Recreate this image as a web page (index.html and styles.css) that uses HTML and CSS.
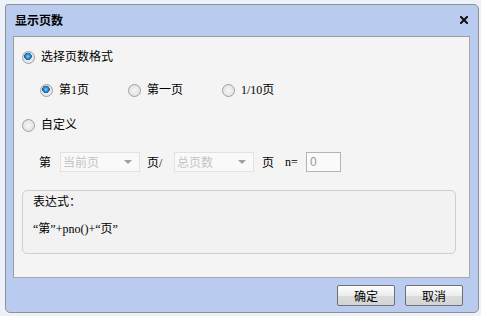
FILE: index.html
```html
<!DOCTYPE html>
<html lang="zh">
<head>
<meta charset="utf-8">
<link rel="stylesheet" href="styles.css">
</head>
<body>
<div class="dialog">
  <div class="titlebar">
    <span class="title">显示页数</span>
    <svg class="close" width="8" height="8" viewBox="0 0 8 8"><path d="M1 1 L7 7 M7 1 L1 7" stroke="#111" stroke-width="2" stroke-linecap="square"/></svg>
  </div>
  <div class="panel">
    <div class="row row1">
      <span class="radio checked"></span><span class="label">选择页数格式</span>
    </div>
    <div class="row row2">
      <div class="opt opt1"><span class="radio checked"></span><span class="label">第1页</span></div>
      <div class="opt opt2"><span class="radio"></span><span class="label">第一页</span></div>
      <div class="opt"><span class="radio"></span><span class="label">1/10页</span></div>
    </div>
    <div class="row row3">
      <span class="radio"></span><span class="label">自定义</span>
    </div>
    <div class="row row4">
      <span class="w1">第</span>
      <div class="select"><span>当前页</span><span class="arrow"></span></div>
      <span class="w2">页/</span>
      <div class="select"><span>总页数</span><span class="arrow"></span></div>
      <span class="w3">页</span>
      <span class="w4">n=</span>
      <div class="input">0</div>
    </div>
    <div class="exprbox">
      <div class="exprtitle">表达式：</div>
      <div class="expr">“第”+pno()+“页”</div>
    </div>
  </div>
  <div class="footer">
    <button class="btn">确定</button>
    <button class="btn">取消</button>
  </div>
</div>
</body>
</html>
```
FILE: styles.css
```css
html, body {
  margin: 0;
  padding: 0;
  background: #edf1f9;
  font-family: "Liberation Serif", "Noto Sans CJK SC", serif;
  font-size: 12px;
  color: #000;
}
.dialog {
  margin: 4px 0 0 5px;
  width: 472px;
  height: 307px;
  border: 1px solid #909090;
  border-radius: 3px 5px 5px 5px;
  background: #b9cbee;
  display: flex;
  flex-direction: column;
}
.titlebar {
  height: 31px;
  display: flex;
  align-items: center;
  padding: 0 10px 0 9px;
  justify-content: space-between;
}
.title {
  font-family: "Noto Sans CJK SC", sans-serif;
  font-weight: bold;
  font-size: 12px;
  margin-top: -2px;
}
.close {
  display: block;
  margin-top: -1px;
}
.panel {
  margin-left: 7px;
  height: 240px;
  border: 1px solid #9b9b9b;
  border-right-color: #a8a8a8;
  border-bottom-color: #a8a8a8;
  background: #f4f4f4;
  padding-left: 8px;
  box-sizing: content-box;
  width: 447px;
}
.row {
  display: flex;
  align-items: center;
  height: 20px;
}
.row1 { margin-top: 10px; }
.row2 { margin-top: 13px; padding-left: 18px; }
.row3 { margin-top: 15px; }
.row4 { margin-top: 17px; padding-left: 17px; }
.opt { display: flex; align-items: center; }
.opt1 { width: 88px; }
.opt2 { width: 94px; }
.radio {
  width: 11px;
  height: 11px;
  border-radius: 50%;
  border: 1px solid #a0a0a0;
  background: radial-gradient(circle at 50% 50%, #f6f6f6 0, #e4e4e4 70%, #d0d0d0 100%);
  box-sizing: content-box;
  flex: none;
}
.radio.checked {
  background:
    radial-gradient(circle at 45% 40%, #8fd0f2 0, #2a8ccf 2.2px, #1b5f9e 3.6px, transparent 4px),
    radial-gradient(circle at 50% 50%, #f6f6f6 0, #e4e4e4 70%, #d0d0d0 100%);
}
.label { margin-left: 6px; line-height: 20px; }
.w1 { width: 21px; }
.w2 { margin-left: 7px; width: 27px; }
.w3 { margin-left: 8px; width: 23px; }
.w4 { width: 21px; }
.select {
  height: 18px;
  border: 1px solid #e2e2e2;
  background: #f9f9f9;
  color: #c4c4c4;
  display: flex;
  align-items: center;
  justify-content: space-between;
  padding-left: 2px;
  padding-right: 7px;
  box-sizing: content-box;
  width: 69px;
}
.arrow {
  width: 0;
  height: 0;
  border-left: 4px solid transparent;
  border-right: 4px solid transparent;
  border-top: 4px solid #a0a0a0;
}
.input {
  width: 30px;
  height: 18px;
  border: 1px solid #b4b4b4;
  background: #fafafa;
  color: #999;
  padding-left: 3px;
  line-height: 18px;
  font-family: "Liberation Sans", sans-serif;
}
.exprbox {
  margin-top: 18px;
  height: 62px;
  border: 1px solid #cfcfcf;
  border-radius: 5px;
  background: #f2f2f2;
  padding-left: 10px;
  box-sizing: content-box;
  width: 422px;
}
.exprtitle { margin-top: 4px; line-height: 14px; }
.expr { margin-top: 13px; line-height: 14px; }
.footer {
  flex: 1;
  display: flex;
  justify-content: flex-end;
  align-items: flex-start;
  padding-top: 7px;
  padding-right: 15px;
  gap: 10px;
}
.btn {
  width: 58px;
  height: 21px;
  border: 1px solid #707070;
  border-radius: 2px;
  background: linear-gradient(#fdfdfd, #ececec 50%, #dcdcdc 51%, #d4d4d4);
  font-family: "Noto Sans CJK SC", sans-serif;
  font-size: 12px;
  padding: 0;
  color: #000;
}
```
